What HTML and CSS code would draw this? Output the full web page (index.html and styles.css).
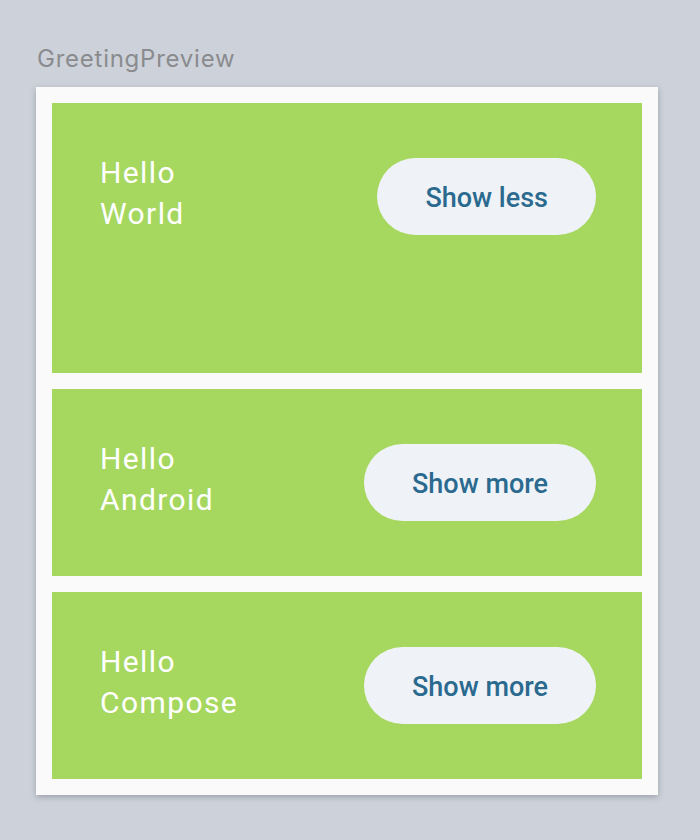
FILE: index.html
```html
<!DOCTYPE html>
<html>
<head>
<meta charset="utf-8">
<link rel="stylesheet" href="styles.css">
</head>
<body>
<div class="page">
  <div class="title">GreetingPreview</div>
  <div class="frame">
    <div class="card card-expanded">
      <div class="row">
        <div class="text">
          <div>Hello</div>
          <div>World</div>
        </div>
        <div class="btn">Show less</div>
      </div>
    </div>
    <div class="card">
      <div class="row">
        <div class="text">
          <div>Hello</div>
          <div>Android</div>
        </div>
        <div class="btn">Show more</div>
      </div>
    </div>
    <div class="card">
      <div class="row">
        <div class="text">
          <div>Hello</div>
          <div>Compose</div>
        </div>
        <div class="btn">Show more</div>
      </div>
    </div>
  </div>
</div>
</body>
</html>
```
FILE: styles.css
```css
html, body {
  margin: 0;
  padding: 0;
  background: #cdd2da;
}
.page {
  width: 700px;
  height: 840px;
  padding: 44px 0 0 36px;
  box-sizing: border-box;
}
.title {
  font-family: Inter, "Noto Sans", sans-serif;
  font-size: 24px;
  letter-spacing: 0.75px;
  color: #8a8b8e;
  line-height: 30px;
  margin-left: 1px;
  height: 43px;
}
.frame {
  width: 622px;
  box-sizing: border-box;
  background: #fafafa;
  padding: 16px;
  display: flex;
  flex-direction: column;
  gap: 16px;
  box-shadow: 0 2px 6px rgba(60, 66, 80, 0.35);
}
.card {
  background: #a6d75f;
  padding: 48px 46px 48px 48px;
  height: 187px;
  box-sizing: border-box;
}
.card-expanded {
  height: 270px;
}
.row {
  display: flex;
  align-items: flex-start;
  justify-content: space-between;
}
.text {
  font-family: Roboto, sans-serif;
  font-size: 30px;
  line-height: 41.5px;
  letter-spacing: 1.4px;
  color: #ffffff;
  padding-top: 0.5px;
}
.btn {
  margin-top: 7px;
  height: 77px;
  box-sizing: border-box;
  padding: 3px 48px 0;
  border-radius: 39px;
  background: #eff3f8;
  color: #2b6a8f;
  font-family: Roboto, sans-serif;
  font-weight: 500;
  font-size: 27px;
  display: flex;
  align-items: center;
}
```
